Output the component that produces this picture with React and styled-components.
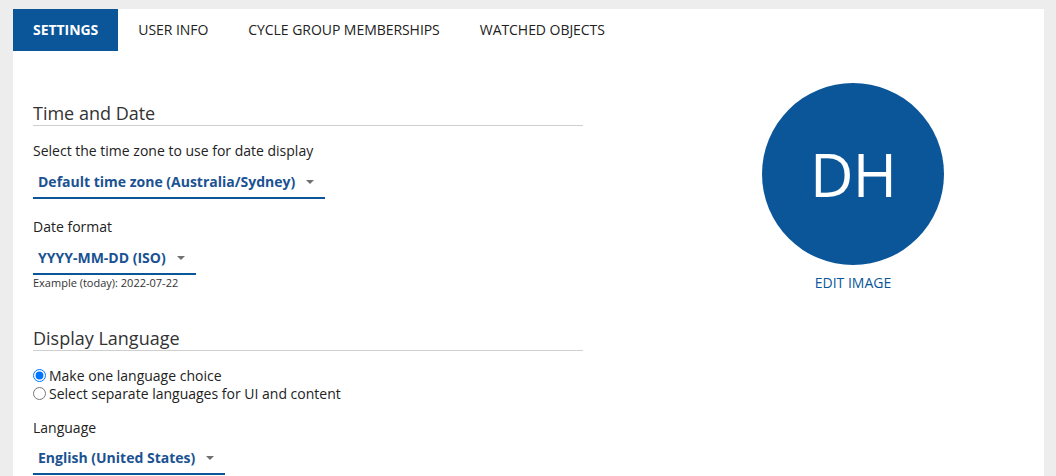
import React from "react";
import styled, { createGlobalStyle } from "styled-components";

const Global = createGlobalStyle`
  html, body { margin: 0; padding: 0; background: #ededed; }
  body { font-family: "Open Sans", "Noto Sans", Arial, sans-serif; color: #222; }
  * { box-sizing: border-box; }
`;

const Page = styled.div`
  padding: 9px 12px 0 13px;
  height: 476px;
  overflow: hidden;
`;

const Panel = styled.div`
  background: #fff;
  min-height: 467px;
`;

const TabBar = styled.nav`
  display: flex;
  height: 42px;
`;

const Tab = styled.button`
  border: 0;
  margin: 0;
  padding: 0 20px 2px;
  height: 42px;
  font-family: inherit;
  font-size: 14px;
  letter-spacing: -0.05px;
  font-weight: ${(p) => (p.$active ? 700 : 400)};
  color: ${(p) => (p.$active ? "#fff" : "#222")};
  background: ${(p) => (p.$active ? "#0a5699" : "transparent")};
  cursor: pointer;
`;

const Body = styled.div`
  display: grid;
  grid-template-columns: 550px 182px;
  column-gap: 179px;
  padding: 0 20px;
`;

const Column = styled.div`
  display: flex;
  flex-direction: column;
  align-items: flex-start;
`;

const SectionTitle = styled.h2`
  align-self: stretch;
  margin: ${(p) => p.$top}px 0 0;
  font-size: 18px;
  line-height: 24px;
  font-weight: 400;
  color: #333;
  border-bottom: 1px solid #cfcfcf;
`;

const Label = styled.div`
  margin-top: ${(p) => p.$top}px;
  font-size: 14px;
  line-height: 20px;
  color: #222;
`;

const Select = styled.div`
  margin-top: ${(p) => p.$top ?? 11}px;
  display: flex;
  align-items: center;
  padding: 0 11px 5px 5px;
  border-bottom: 2px solid #0a5699;
  font-size: 14px;
  line-height: 20px;
  font-weight: 700;
  color: #1a5292;
`;

const Caret = styled.span`
  margin-left: 11px;
  width: 0;
  height: 0;
  border-left: 4px solid transparent;
  border-right: 4px solid transparent;
  border-top: 4px solid #707070;
`;

const Hint = styled.div`
  margin-top: 0;
  font-size: 11px;
  line-height: 15px;
  color: #333;
`;

const Radios = styled.div`
  margin-top: 15px;
  display: flex;
  flex-direction: column;
`;

const RadioRow = styled.label`
  display: flex;
  align-items: center;
  height: 18px;
  font-size: 14px;
  color: #222;
  input {
    margin: 0 3px 0 0;
    width: 13px;
    height: 13px;
  }
`;

const AvatarBlock = styled.div`
  margin-top: 32px;
  display: flex;
  flex-direction: column;
  align-items: center;
`;

const Avatar = styled.div`
  width: 182px;
  height: 182px;
  border-radius: 50%;
  background: #0a5699;
  color: #fff;
  display: flex;
  align-items: center;
  justify-content: center;
  font-size: 60px;
  font-weight: 400;
  letter-spacing: -1px;
`;

const EditLink = styled.a`
  margin-top: 9px;
  font-size: 14px;
  line-height: 18px;
  color: #0a5699;
  text-decoration: none;
  font-weight: 500;
`;

const tabs = ["SETTINGS", "USER INFO", "CYCLE GROUP MEMBERSHIPS", "WATCHED OBJECTS"];

export default function App() {
  return (
    <>
      <Global />
      <Page>
        <Panel>
          <TabBar>
            {tabs.map((t, i) => (
              <Tab key={t} $active={i === 0}>{t}</Tab>
            ))}
          </TabBar>
          <Body>
            <Column>
              <SectionTitle $top={50}>Time and Date</SectionTitle>
              <Label $top={15}>Select the time zone to use for date display</Label>
              <Select>
                Default time zone (Australia/Sydney)
                <Caret />
              </Select>
              <Label $top={18}>Date format</Label>
              <Select>
                YYYY-MM-DD (ISO)
                <Caret />
              </Select>
              <Hint>Example (today): 2022-07-22</Hint>
              <SectionTitle $top={36}>Display Language</SectionTitle>
              <Radios>
                <RadioRow>
                  <input type="radio" name="lang" defaultChecked />
                  Make one language choice
                </RadioRow>
                <RadioRow>
                  <input type="radio" name="lang" />
                  Select separate languages for UI and content
                </RadioRow>
              </Radios>
              <Label $top={16}>Language</Label>
              <Select $top={10}>
                English (United States)
                <Caret />
              </Select>
            </Column>
            <AvatarBlock>
              <Avatar>DH</Avatar>
              <EditLink href="#">EDIT IMAGE</EditLink>
            </AvatarBlock>
          </Body>
        </Panel>
      </Page>
    </>
  );
}
